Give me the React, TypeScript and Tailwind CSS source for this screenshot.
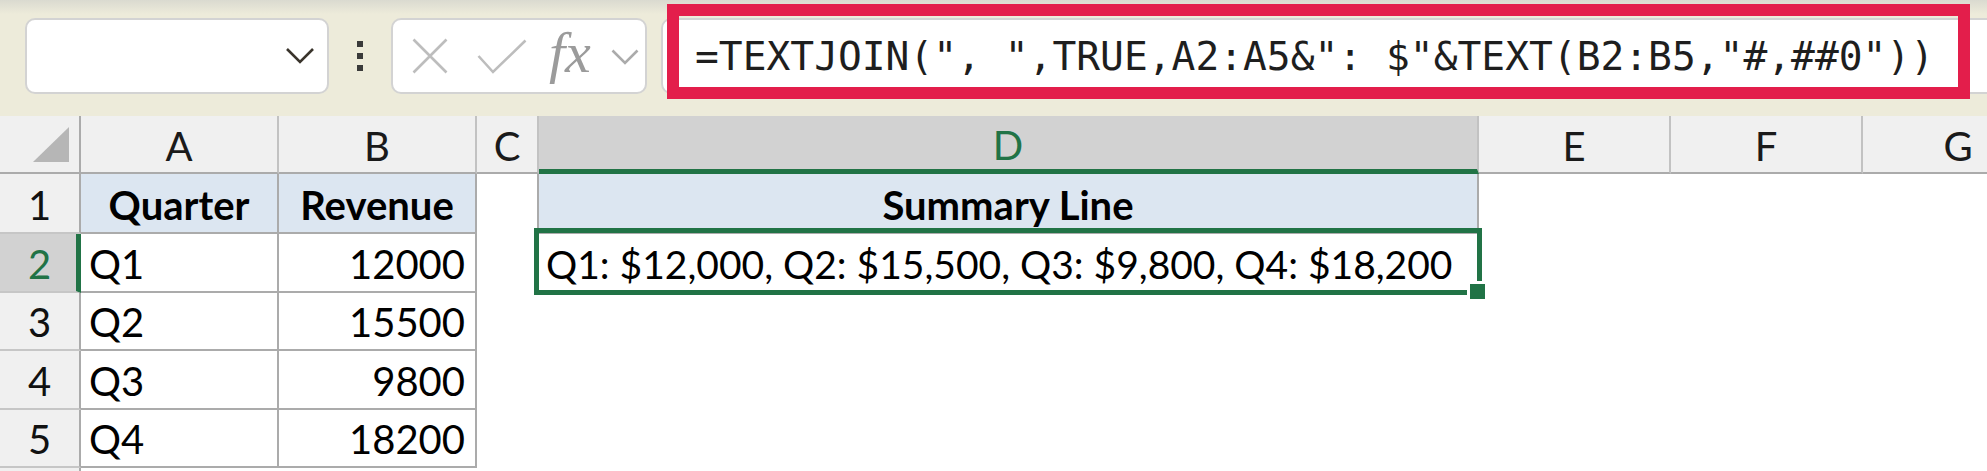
import React from "react"

// widths: row header 81, A 198, B 198, C 62, D 940, E 192, F 192, G 192

function RowHeader({ n, active = false }: { n: number; active?: boolean }) {
  if (active) {
    return (
      <div className="w-[81px] shrink-0 h-full flex items-center justify-center pt-[3px] pl-[3px] bg-[#d2d2d2] border-r-[5px] border-b-2 border-r-[#217346] border-b-[#c6c6c6] text-[#217346] text-[40px] leading-none">
        {n}
      </div>
    )
  }
  return (
    <div className="w-[81px] shrink-0 h-full flex items-center justify-center pt-[3px] bg-[#f0f0f0] border-r-2 border-b-2 border-r-[#ababab] border-b-[#c6c6c6] text-[#111] text-[40px] leading-none">
      {n}
    </div>
  )
}

function DataRow({ n, q, rev, active = false }: { n: number; q: string; rev: string; active?: boolean }) {
  return (
    <div className="flex h-[58.5px]">
      <RowHeader n={n} active={active} />
      <div className="w-[198px] shrink-0 h-full flex items-center pl-[8px] pt-[3px] border-r-2 border-b-2 border-[#ababab] text-[40px] leading-none text-black">
        {q}
      </div>
      <div className="w-[198px] shrink-0 h-full flex items-center justify-end pr-[10px] pt-[3px] border-r-2 border-b-2 border-[#ababab] text-[40px] leading-none text-black">
        {rev}
      </div>
      <div className="w-[62px] shrink-0 h-full" />
      <div className="w-[940px] shrink-0 h-full" />
    </div>
  )
}

function FormulaBar() {
  return (
    <div className="relative h-[116px] bg-[#edebda] flex items-start pt-[18px] pl-[25px] overflow-hidden">
      <div className="absolute inset-x-0 top-0 h-[14px] bg-linear-to-b from-[#dadad0] to-[#edebda]" />

      {/* name box */}
      <div className="relative w-[304px] h-[76px] shrink-0 rounded-[10px] border-2 border-[#d3d3d3] bg-white flex items-center justify-end pr-[12px]">
        <svg width="30" height="18" viewBox="0 0 30 18">
          <path d="M2 2 L15 15 L28 2" fill="none" stroke="#3a342c" strokeWidth="2.6" />
        </svg>
      </div>

      {/* grip dots */}
      <div className="relative ml-[28px] w-[6px] h-[76px] shrink-0 flex flex-col items-center justify-center gap-[6px]">
        <div className="w-[6px] h-[6px] bg-[#3a3a3a]" />
        <div className="w-[6px] h-[6px] bg-[#3a3a3a]" />
        <div className="w-[6px] h-[6px] bg-[#3a3a3a]" />
      </div>

      {/* cancel / enter / fx */}
      <div className="relative ml-[28px] w-[256px] h-[76px] shrink-0 rounded-[10px] border-2 border-[#d3d3d3] bg-white flex items-center pl-[19px]">
        <svg width="36" height="36" viewBox="0 0 36 36">
          <path d="M1.5 1.5 L34.5 34.5 M34.5 1.5 L1.5 34.5" fill="none" stroke="#bdbdbd" strokeWidth="2.6" />
        </svg>
        <svg className="ml-[29px]" width="50" height="35" viewBox="0 0 50 35">
          <path d="M1.5 17 L16 33 L48.5 1.5" fill="none" stroke="#bdbdbd" strokeWidth="2.6" />
        </svg>
        <span className="ml-[22px] font-['Liberation_Serif',serif] italic text-[58px] leading-none text-[#9b9b9b] -mt-[6px]">
          fx
        </span>
        <svg className="ml-auto mr-[6px] mt-[2px]" width="28" height="16" viewBox="0 0 28 16">
          <path d="M1.5 1.5 L14 14 L26.5 1.5" fill="none" stroke="#ababab" strokeWidth="2.6" />
        </svg>
      </div>

      {/* formula box */}
      <div className="relative ml-[14px] w-[1400px] h-[76px] shrink-0 rounded-[10px] border-2 border-[#d3d3d3] bg-white flex items-center pl-[32px] pt-[2px]">
        <span className="font-['DejaVu_Sans_Mono',monospace] text-[39.6px] leading-none text-[#1e1e1e] whitespace-pre">
          =TEXTJOIN(", ",TRUE,A2:A5&": $"&TEXT(B2:B5,"#,##0"))
        </span>
        <div className="absolute left-[4px] -top-[16px] w-[1303px] h-[95px] border-[12px] border-[#e31e4b]" />
      </div>
    </div>
  )
}

function ColumnHeaders() {
  const hdr =
    "shrink-0 h-full flex items-center justify-center pt-[4px] text-[40px] leading-none text-[#1a1a1a] border-r-2 border-b-2 border-r-[#c2c2c2] border-b-[#ababab]"
  return (
    <div className="flex h-[58px] bg-[#f0f0f0]">
      <div className="w-[81px] shrink-0 h-full flex items-end justify-end p-[10px] border-r-2 border-b-2 border-[#ababab]">
        <svg width="36" height="35" viewBox="0 0 36 35">
          <polygon points="36,0 36,35 0,35" fill="#b6b6b6" />
        </svg>
      </div>
      <div className={`w-[198px] ${hdr}`}>A</div>
      <div className={`w-[198px] ${hdr}`}>B</div>
      <div className={`w-[62px] ${hdr}`}>C</div>
      <div className="w-[940px] shrink-0 h-full flex items-center justify-center pt-[4px] text-[40px] leading-none text-[#217346] bg-[#d2d2d2] border-r-2 border-r-[#c2c2c2] border-b-[5px] border-b-[#217346]">
        D
      </div>
      <div className={`w-[192px] ${hdr}`}>E</div>
      <div className={`w-[192px] ${hdr}`}>F</div>
      <div className={`w-[192px] ${hdr}`}>G</div>
    </div>
  )
}

function Sheet() {
  return (
    <div className="flex flex-col">
      <ColumnHeaders />

      {/* row 1 */}
      <div className="flex h-[60px]">
        <RowHeader n={1} />
        <div className="w-[198px] shrink-0 h-full flex items-center justify-center pt-[4px] bg-[#dce6f1] border-r-2 border-b-2 border-[#ababab] font-bold text-[40px] leading-none text-black">
          Quarter
        </div>
        <div className="w-[198px] shrink-0 h-full flex items-center justify-center pt-[4px] bg-[#dce6f1] border-r-2 border-b-2 border-[#ababab] font-bold text-[40px] leading-none text-black">
          Revenue
        </div>
        <div className="w-[62px] shrink-0 h-full border-r-2 border-[#ababab]" />
        <div className="w-[940px] shrink-0 h-full flex items-center justify-center pt-[4px] bg-[#dce6f1] border-r-2 border-b-2 border-[#ababab] font-bold text-[40px] leading-none text-black">
          Summary Line
        </div>
      </div>

      {/* row 2 with the selected D2 */}
      <div className="flex h-[58.5px]">
        <RowHeader n={2} active />
        <div className="w-[198px] shrink-0 h-full flex items-center pl-[8px] pt-[3px] border-r-2 border-b-2 border-[#ababab] text-[40px] leading-none text-black">
          Q1
        </div>
        <div className="w-[198px] shrink-0 h-full flex items-center justify-end pr-[10px] pt-[3px] border-r-2 border-b-2 border-[#ababab] text-[40px] leading-none text-black">
          12000
        </div>
        <div className="w-[62px] shrink-0 h-full" />
        <div className="relative w-[940px] shrink-0 h-full flex items-center pl-[7px] pt-[3px] text-[39px] leading-none text-black whitespace-pre">
          Q1: $12,000, Q2: $15,500, Q3: $9,800, Q4: $18,200
          <div className="absolute -left-[5px] -top-[6px] -right-[3px] -bottom-[2.5px] border-[5px] border-[#217346]" />
          <div className="absolute -right-[9px] -bottom-[9px] w-[21px] h-[21px] bg-[#217346] border-[3px] border-white" />
        </div>
      </div>

      <DataRow n={3} q="Q2" rev="15500" />
      <DataRow n={4} q="Q3" rev="9800" />
      <DataRow n={5} q="Q4" rev="18200" />
      <div className="flex h-[20px]">
        <div className="w-[81px] shrink-0 h-full bg-[#f0f0f0] border-r-2 border-[#ababab]" />
        <div className="w-[198px] shrink-0 h-full" />
      </div>
    </div>
  )
}

export default function App() {
  return (
    <div className="w-[1987px] h-[471px] overflow-hidden bg-white font-['Lato',sans-serif]">
      <FormulaBar />
      <Sheet />
    </div>
  )
}
